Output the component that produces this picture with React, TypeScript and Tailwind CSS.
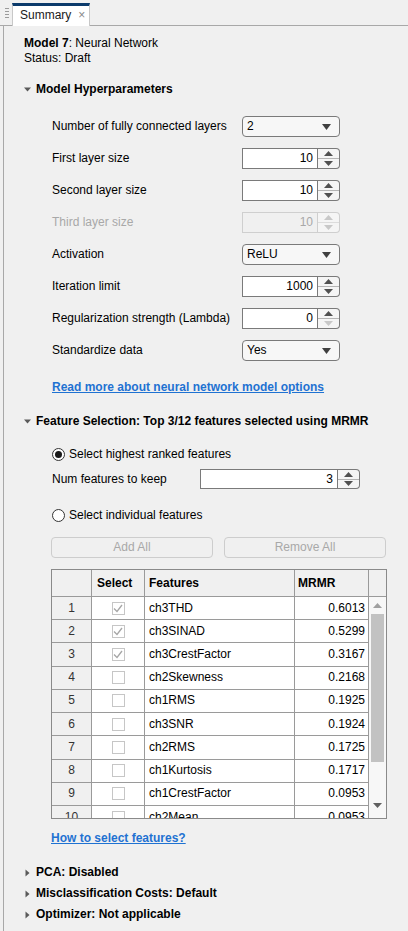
import React from 'react';

const FONT = { fontFamily: '"Liberation Sans", Arial, sans-serif' };

const FEATURES = [
  { n: 1, name: 'ch3THD', v: '0.6013', sel: true },
  { n: 2, name: 'ch3SINAD', v: '0.5299', sel: true },
  { n: 3, name: 'ch3CrestFactor', v: '0.3167', sel: true },
  { n: 4, name: 'ch2Skewness', v: '0.2168', sel: false },
  { n: 5, name: 'ch1RMS', v: '0.1925', sel: false },
  { n: 6, name: 'ch3SNR', v: '0.1924', sel: false },
  { n: 7, name: 'ch2RMS', v: '0.1725', sel: false },
  { n: 8, name: 'ch1Kurtosis', v: '0.1717', sel: false },
  { n: 9, name: 'ch1CrestFactor', v: '0.0953', sel: false },
  { n: 10, name: 'ch2Mean', v: '0.0953', sel: false },
];

function Caret({ open }: { open: boolean }) {
  return open ? (
    <svg width="7" height="5" viewBox="0 0 7 5" className="shrink-0">
      <path d="M0 0.5 L7 0.5 L3.5 4.5 Z" fill="#5a5a5a" />
    </svg>
  ) : (
    <svg width="5" height="8" viewBox="0 0 5 8" className="shrink-0 ml-[1px]">
      <path d="M0.5 0.5 L4.5 4 L0.5 7.5 Z" fill="#5a5a5a" />
    </svg>
  );
}

function Section({ open, title }: { open: boolean; title: string }) {
  return (
    <div className="flex items-center h-[15px]">
      <div className="w-[12px] flex justify-start">
        <Caret open={open} />
      </div>
      <span className="font-bold text-black">{title}</span>
    </div>
  );
}

function Dropdown({ value }: { value: string }) {
  return (
    <div className="w-[98px] h-[21px] rounded-[4px] border border-[#7a7a7a] bg-[#f7f7f7] flex items-center justify-between pl-[4px] pr-[8px]">
      <span className="text-black">{value}</span>
      <svg width="9" height="6" viewBox="0 0 9 6">
        <path d="M0 0 L9 0 L4.5 6 Z" fill="#404040" />
      </svg>
    </div>
  );
}

function Arrow({ up, color }: { up: boolean; color: string }) {
  return (
    <svg width="9" height="5" viewBox="0 0 9 5">
      {up ? <path d="M0 5 L9 5 L4.5 0 Z" fill={color} /> : <path d="M0 0 L9 0 L4.5 5 Z" fill={color} />}
    </svg>
  );
}

function Spinner({
  value,
  width = 98,
  disabled = false,
  downDisabled = false,
  h = 21,
}: {
  value: string;
  width?: number;
  disabled?: boolean;
  downDisabled?: boolean;
  h?: number;
}) {
  const border = disabled ? 'border-[#cfcfcf]' : 'border-[#7a7a7a]';
  return (
    <div className="flex" style={{ width, height: h }}>
      <div
        className={`flex-1 border ${border} ${disabled ? 'bg-[#f0f0f0] text-[#a8a8a8]' : 'bg-white text-black'} flex items-center justify-end pr-[4px]`}
      >
        {value}
      </div>
      <div className={`w-[22px] border border-l-0 ${border} rounded-r-[4px] flex flex-col bg-[#f5f5f5]`}>
        <div className={`flex-1 flex items-center justify-center border-b ${disabled ? 'border-[#dcdcdc]' : 'border-[#b4b4b4]'}`}>
          <Arrow up color={disabled ? '#c8c8c8' : '#505050'} />
        </div>
        <div className="flex-1 flex items-center justify-center">
          <Arrow up={false} color={disabled || downDisabled ? '#c8c8c8' : '#505050'} />
        </div>
      </div>
    </div>
  );
}

function Radio({ checked, label }: { checked: boolean; label: string }) {
  return (
    <div className="flex items-center h-[16px] gap-[4px]">
      <div className="w-[13px] h-[13px] rounded-full border border-[#333] bg-white flex items-center justify-center">
        {checked && <div className="w-[7px] h-[7px] rounded-full bg-[#1a1a1a]" />}
      </div>
      <span className="text-black">{label}</span>
    </div>
  );
}

function Check({ on }: { on: boolean }) {
  return (
    <div className="w-[13px] h-[13px] border border-[#c6c6c6] bg-white flex items-center justify-center">
      {on && (
        <svg width="10" height="9" viewBox="0 0 10 9">
          <path d="M1 4.5 L4 7.5 L9 1" fill="none" stroke="#a6a6a6" strokeWidth="1.3" />
        </svg>
      )}
    </div>
  );
}

const ROWS: { label: string; control: React.ReactNode; disabled?: boolean }[] = [
  { label: 'Number of fully connected layers', control: <Dropdown value="2" /> },
  { label: 'First layer size', control: <Spinner value="10" /> },
  { label: 'Second layer size', control: <Spinner value="10" /> },
  { label: 'Third layer size', control: <Spinner value="10" disabled />, disabled: true },
  { label: 'Activation', control: <Dropdown value="ReLU" /> },
  { label: 'Iteration limit', control: <Spinner value="1000" /> },
  { label: 'Regularization strength (Lambda)', control: <Spinner value="0" downDisabled /> },
  { label: 'Standardize data', control: <Dropdown value="Yes" /> },
];

function FeatureTable() {
  return (
    <div className="w-[336px] h-[250px] border border-[#8a8a8a] bg-white overflow-hidden flex">
      <div className="flex-1 min-w-0">
        <div className="flex h-[27px] bg-[#f0f0f0] border-b border-[#9a9a9a] font-bold text-black">
          <div className="w-[40px] border-r border-[#9a9a9a]" />
          <div className="w-[53px] border-r border-[#9a9a9a] flex items-center pl-[5px]">Select</div>
          <div className="w-[150px] border-r border-[#9a9a9a] flex items-center pl-[4px]">Features</div>
          <div className="flex-1 border-r border-[#9a9a9a] flex items-center pl-[3px]">MRMR</div>
        </div>
        {FEATURES.map((f) => (
          <div key={f.n} className="flex h-[23.22px] border-b border-[#9a9a9a] text-black">
            <div className="w-[40px] shrink-0 bg-[#f0f0f0] border-r border-[#9a9a9a] flex items-center justify-center text-[#333]">
              {f.n}
            </div>
            <div className="w-[53px] shrink-0 border-r border-[#9a9a9a] flex items-center justify-center">
              <Check on={f.sel} />
            </div>
            <div className="w-[150px] shrink-0 border-r border-[#9a9a9a] flex items-center pl-[4px]">{f.name}</div>
            <div className="flex-1 border-r border-[#9a9a9a] flex items-center justify-end pr-[3px]">{f.v}</div>
          </div>
        ))}
      </div>
      <div className="w-[17px] shrink-0 flex flex-col">
        <div className="h-[27px] bg-[#f0f0f0] border-b border-[#9a9a9a] shrink-0" />
        <div className="flex-1 bg-[#f7f7f7] flex flex-col items-center">
          <div className="h-[17px] flex items-center justify-center">
            <Arrow up color="#a0a0a0" />
          </div>
          <div className="w-[13px] h-[148px] bg-[#c2c2c2]" />
          <div className="flex-1" />
          <div className="h-[20px] flex items-start justify-center pt-[5px]">
            <Arrow up={false} color="#606060" />
          </div>
        </div>
      </div>
    </div>
  );
}

export default function App() {
  return (
    <div className="w-[408px] h-[931px] bg-[#f0f0f0] overflow-hidden text-[12px] leading-[15px] text-black" style={FONT}>
      {/* tab strip */}
      <div className="flex items-end h-[26px]">
        <div className="w-[12px] h-full border-b border-[#a8a8a8] flex items-center pl-[5px]">
          <div className="flex flex-col gap-[2px] mt-[1px]">
            {[0, 1, 2, 3].map((i) => (
              <div key={i} className="w-[4px] h-px bg-[#9a9a9a]" />
            ))}
          </div>
        </div>
        <div className="w-[78px] h-[23px] bg-white border-t-[3px] border-t-[#0b3a6b] border-x border-x-[#c8c8c8] flex items-center pl-[7px] pb-[2px] gap-[7px]">
          <span className="text-[12px] text-[#1a1a1a]">Summary</span>
          <span className="text-[12px] text-[#8a8a8a] leading-none">×</span>
        </div>
        <div className="flex-1 h-full border-b border-[#a8a8a8]" />
      </div>

      {/* panel */}
      <div className="ml-[3px] border-l border-[#a8a8a8] h-[905px] pl-[20px] pt-[10px]">
        <div>
          <span className="font-bold">Model 7</span>: Neural Network
        </div>
        <div>Status: Draft</div>

        <div className="mt-[16px]">
          <Section open title="Model Hyperparameters" />
        </div>

        <div className="mt-[19px] ml-[28px] flex flex-col gap-[11px]">
          {ROWS.map((r) => (
            <div key={r.label} className="flex items-center h-[21px]">
              <div className={`w-[190px] ${r.disabled ? 'text-[#a8a8a8]' : 'text-black'}`}>{r.label}</div>
              {r.control}
            </div>
          ))}
        </div>

        <div className="mt-[19px] ml-[28px]">
          <span className="font-bold text-[#1f72d2] underline">Read more about neural network model options</span>
        </div>

        <div className="mt-[19px]">
          <Section open title="Feature Selection: Top 3/12 features selected using MRMR" />
        </div>

        <div className="ml-[28px] mt-[17px]">
          <Radio checked label="Select highest ranked features" />
          <div className="flex items-center h-[20px] mt-[7px]">
            <div className="w-[148px]">Num features to keep</div>
            <Spinner value="3" width={160} h={20} />
          </div>
          <div className="mt-[18px]">
            <Radio checked={false} label="Select individual features" />
          </div>
          <div className="flex gap-[11px] mt-[14px] ml-[-1px]">
            <div className="w-[162px] h-[21px] rounded-[4px] border border-[#cdcdcd] flex items-center justify-center text-[#a8a8a8]">
              Add All
            </div>
            <div className="w-[162px] h-[21px] rounded-[4px] border border-[#cdcdcd] flex items-center justify-center text-[#a8a8a8]">
              Remove All
            </div>
          </div>
          <div className="mt-[11px] ml-[-1px]">
            <FeatureTable />
          </div>
          <div className="mt-[12px] ml-[-1px]">
            <span className="font-bold text-[#1f72d2] underline">How to select features?</span>
          </div>
        </div>

        <div className="mt-[19px] flex flex-col gap-[6px]">
          <Section open={false} title="PCA: Disabled" />
          <Section open={false} title="Misclassification Costs: Default" />
          <Section open={false} title="Optimizer: Not applicable" />
        </div>
      </div>
    </div>
  );
}
